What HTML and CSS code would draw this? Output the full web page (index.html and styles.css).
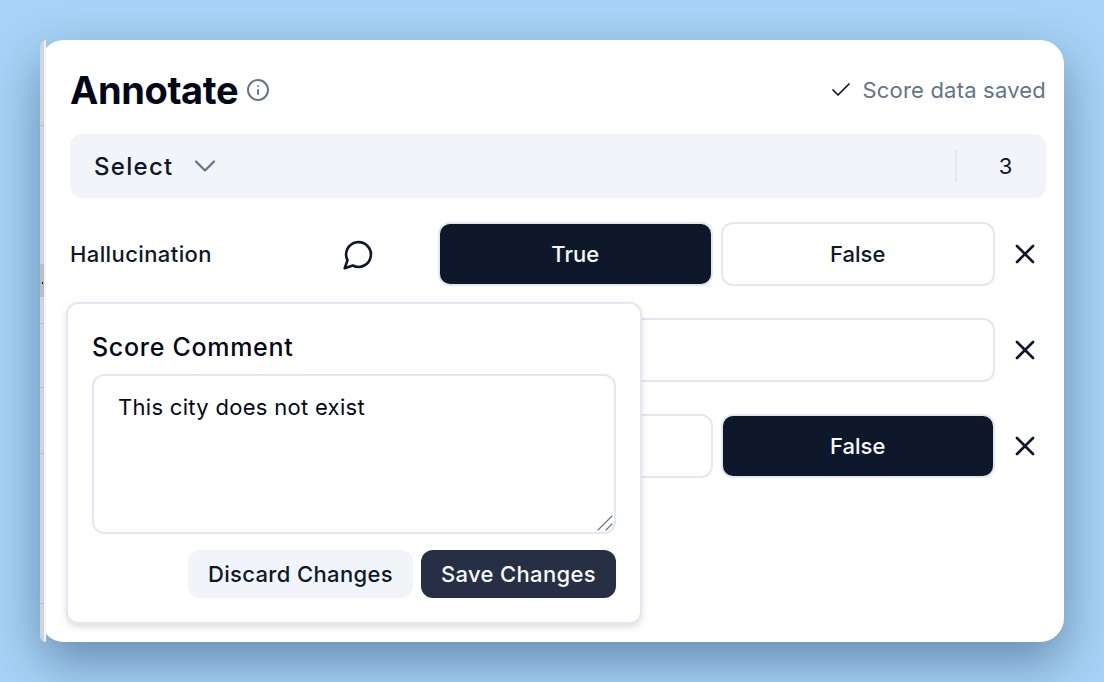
FILE: index.html
```html
<!DOCTYPE html>
<html lang="en">
<head>
  <meta charset="UTF-8">
  <meta name="viewport" content="width=device-width, initial-scale=1.0">
  <title>Annotate</title>
  <link rel="stylesheet" href="styles.css">
</head>
<body>
  <div class="card">
    <div class="edge"></div>
    <div class="header">
      <div class="title-wrap">
        <h1>Annotate</h1>
        <svg class="info-icon" viewBox="0 0 24 24" fill="none" stroke="currentColor" stroke-width="2" stroke-linecap="round" stroke-linejoin="round">
          <circle cx="12" cy="12" r="10"></circle>
          <path d="M12 16v-4"></path>
          <path d="M12 8h.01"></path>
        </svg>
      </div>
      <div class="saved">
        <svg class="check-icon" viewBox="0 0 24 24" fill="none" stroke="currentColor" stroke-width="1.7" stroke-linecap="round" stroke-linejoin="round">
          <path d="M20 6 9 17l-5-5"></path>
        </svg>
        <span>Score data saved</span>
      </div>
    </div>

    <div class="select-bar">
      <span class="select-label">Select</span>
      <svg class="chevron" viewBox="0 0 24 24" fill="none" stroke="currentColor" stroke-width="1.5" stroke-linecap="round" stroke-linejoin="round">
        <path d="m6 9 6 6 6-6"></path>
      </svg>
      <div class="select-count">3</div>
    </div>

    <div class="rows">
      <div class="row">
        <div class="row-name">Hallucination</div>
        <svg class="comment-icon" viewBox="0 0 24 24" fill="none" stroke="currentColor" stroke-width="1.9" stroke-linecap="round" stroke-linejoin="round">
          <path d="M7.9 20A9 9 0 1 0 4 16.1L2 22Z"></path>
        </svg>
        <div class="options">
          <button class="opt opt-on" type="button">True</button>
          <button class="opt" type="button">False</button>
        </div>
        <svg class="x-icon" viewBox="0 0 24 24" fill="none" stroke="currentColor" stroke-width="2" stroke-linecap="round" stroke-linejoin="round">
          <path d="M18 6 6 18"></path>
          <path d="m6 6 12 12"></path>
        </svg>
      </div>
      <div class="row">
        <div class="row-name"></div>
        <div class="comment-space"></div>
        <div class="options">
          <button class="opt" type="button"></button>
        </div>
        <svg class="x-icon" viewBox="0 0 24 24" fill="none" stroke="currentColor" stroke-width="2" stroke-linecap="round" stroke-linejoin="round">
          <path d="M18 6 6 18"></path>
          <path d="m6 6 12 12"></path>
        </svg>
      </div>
      <div class="row">
        <div class="row-name"></div>
        <div class="comment-space"></div>
        <div class="options">
          <button class="opt" type="button"></button>
          <button class="opt opt-on" type="button">False</button>
        </div>
        <svg class="x-icon" viewBox="0 0 24 24" fill="none" stroke="currentColor" stroke-width="2" stroke-linecap="round" stroke-linejoin="round">
          <path d="M18 6 6 18"></path>
          <path d="m6 6 12 12"></path>
        </svg>
      </div>
    </div>

    <div class="popover">
      <div class="popover-title">Score Comment</div>
      <div class="comment-wrap">
        <textarea class="comment-box">This city does not exist</textarea>
        <svg class="resize-grip" viewBox="0 0 16 16" fill="none" stroke="currentColor" stroke-width="1.2" stroke-linecap="round">
          <path d="M1 15 15 1"></path>
          <path d="M9 15 15 9"></path>
        </svg>
      </div>
      <div class="popover-buttons">
        <button class="btn-discard" type="button">Discard Changes</button>
        <button class="btn-save" type="button">Save Changes</button>
      </div>
    </div>
  </div>
</body>
</html>
```

FILE: styles.css
```css
* {
  margin: 0;
  padding: 0;
  box-sizing: border-box;
}
body {
  font-family: 'Inter', 'Liberation Sans', sans-serif;
  background: #a6d3f7;
  color: #0f172a;
  width: 1104px;
  height: 682px;
  padding: 40px;
  overflow: hidden;
}
.card {
  position: relative;
  width: 1024px;
  height: 602px;
  background: #fff;
  border-radius: 24px;
  padding: 26px 18px 0 30px;
  box-shadow: 0 20px 50px rgba(10, 30, 60, 0.4);
}
/* strip of the page behind the card, with its table lines */
.edge {
  position: absolute;
  left: 0;
  top: 0;
  bottom: 0;
  width: 6px;
  border-radius: 24px 0 0 24px;
  background:
    linear-gradient(#000, #000) 2px 242px / 1px 2px no-repeat,
    linear-gradient(#babdc2, #babdc2) 0 224px / 4px 33px no-repeat,
    linear-gradient(#babdc2, #babdc2) 0 85px / 4px 1px no-repeat,
    linear-gradient(#babdc2, #babdc2) 0 283px / 4px 1px no-repeat,
    linear-gradient(#babdc2, #babdc2) 0 347px / 4px 1px no-repeat,
    linear-gradient(#babdc2, #babdc2) 0 413px / 4px 1px no-repeat,
    linear-gradient(#babdc2, #babdc2) 0 563px / 4px 1px no-repeat,
    linear-gradient(to right, #d0d3d8 4px, #f1f2f4 4px);
}

/* Header */
.header {
  display: flex;
  justify-content: space-between;
  align-items: center;
  height: 48px;
}
.title-wrap {
  display: flex;
  align-items: center;
  gap: 8px;
}
h1 {
  font-size: 38px;
  line-height: 48px;
  font-weight: 700;
  letter-spacing: -0.4px;
  color: #020817;
}
.info-icon {
  width: 24px;
  height: 24px;
  color: #64748b;
}
.saved {
  display: flex;
  align-items: center;
  gap: 9px;
  font-size: 22px;
  letter-spacing: 0.2px;
  color: #64748b;
}
.check-icon {
  width: 24px;
  height: 24px;
  color: #0f172a;
}

/* Select */
.select-bar {
  display: flex;
  align-items: center;
  height: 64px;
  margin-top: 20px;
  padding-left: 24px;
  background: #f1f5f9;
  border-radius: 12px;
}
.select-label {
  font-size: 24px;
  font-weight: 500;
  letter-spacing: 1.3px;
}
.chevron {
  width: 36px;
  height: 36px;
  margin-left: 13px;
  color: #64748b;
}
.select-count {
  margin-left: auto;
  width: 91px;
  height: 32px;
  padding-left: 8px;
  line-height: 32px;
  border-left: 2px solid #e2e8f0;
  text-align: center;
  font-size: 22px;
}

/* Rows */
.rows {
  display: flex;
  flex-direction: column;
  gap: 32px;
  margin-top: 24px;
}
.row {
  display: flex;
  align-items: center;
  height: 64px;
}
.row-name {
  width: 272px;
  font-size: 22px;
  font-weight: 500;
  letter-spacing: 0.4px;
}
.comment-icon {
  width: 33px;
  height: 33px;
  margin-right: -1px;
}
.comment-space {
  width: 32px;
}
.options {
  display: flex;
  gap: 8px;
  width: 557px;
  margin-left: 64px;
}
.opt {
  flex: 1;
  height: 64px;
  background: #fff;
  color: #0f172a;
  border: 2px solid #e2e8f0;
  border-radius: 12px;
  font-family: inherit;
  font-size: 22px;
  font-weight: 500;
}
.opt-on {
  background: #0f172a;
  color: #f8fafc;
}
.x-icon {
  width: 32px;
  height: 32px;
  margin-left: 14px;
}

/* Popover */
.popover {
  position: absolute;
  left: 26px;
  top: 262px;
  width: 576px;
  height: 322px;
  background: #fff;
  border: 2px solid #e2e8f0;
  border-radius: 12px;
  padding: 24px;
  box-shadow: 0 4px 6px -1px rgba(0, 0, 0, 0.1), 0 2px 12px rgba(0, 0, 0, 0.05);
}
.popover-title {
  font-size: 25px;
  line-height: 38px;
  font-weight: 500;
  letter-spacing: 0.7px;
  color: #020817;
}
.comment-wrap {
  position: relative;
  margin-top: 8px;
}
.comment-box {
  display: block;
  width: 100%;
  height: 160px;
  padding: 15px 24px;
  border: 2px solid #e2e8f0;
  border-radius: 12px;
  outline: none;
  resize: none;
  font-family: inherit;
  font-size: 22px;
  line-height: 32px;
  letter-spacing: 0.3px;
  color: #020817;
}
.resize-grip {
  position: absolute;
  right: 3px;
  bottom: 3px;
  width: 16px;
  height: 16px;
  color: #64748b;
}
.popover-buttons {
  display: flex;
  justify-content: flex-end;
  gap: 8px;
  margin-top: 16px;
}
.popover-buttons button {
  height: 48px;
  padding: 0 20px;
  border: none;
  border-radius: 12px;
  font-family: inherit;
  font-size: 22px;
  font-weight: 500;
  letter-spacing: 0.35px;
}
.btn-discard {
  background: #f1f5f9;
  color: #0f172a;
}
.btn-save {
  background: #262f43;
  color: #f8fafc;
}
```
